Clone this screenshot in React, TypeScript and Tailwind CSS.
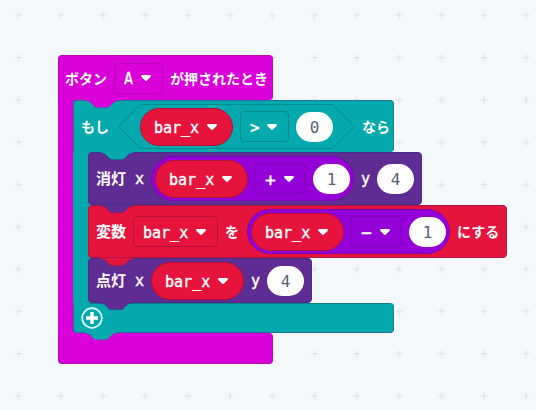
import type { ReactNode } from "react";

const MONO = "font-['DejaVu_Sans_Mono','Noto_Sans_CJK_JP',monospace]";

function Arrow({ className }: { className: string }) {
  return (
    <svg
      viewBox="0 0 10 6"
      className={`pointer-events-none absolute top-1/2 h-[6px] w-[10px] -translate-y-1/2 ${className}`}
      aria-hidden="true"
    >
      <path
        d="M1.4 0H8.6C9.9 0 10.3 1.2 9.5 2L6.2 5.3C5.5 6.1 4.5 6.1 3.8 5.3L.5 2C-.3 1.2.1 0 1.4 0Z"
        fill="#fff"
      />
    </svg>
  );
}

type PickerProps = { label: string; options: string[]; className: string };

/* Square drop-down field set into a block. */
function Picker({ label, options, className }: PickerProps) {
  return (
    <span className="relative flex shrink-0">
      <select
        aria-label={label}
        className={`h-[31px] appearance-none rounded-[4px] border bg-transparent pt-[2px] pl-[9px] leading-[20px] text-white outline-none [-webkit-text-stroke:0.4px_white] ${className}`}
      >
        {options.map((o) => (
          <option key={o}>{o}</option>
        ))}
      </select>
      <Arrow className="right-[12px]" />
    </span>
  );
}

/* Round variable reporter. */
function Variable() {
  return (
    <span className="relative flex shrink-0">
      <select
        aria-label="変数"
        className="h-[38px] w-[93px] appearance-none rounded-full border border-[#b0103c] bg-[#e6143c] pt-[2px] pl-[13px] text-[15px] leading-[20px] text-white outline-none [-webkit-text-stroke:0.4px_white]"
      >
        <option>bar_x</option>
      </select>
      <Arrow className="right-[16px]" />
    </span>
  );
}

function Num({ value, label }: { value: string; label: string }) {
  return (
    <input
      aria-label={label}
      defaultValue={value}
      className="h-[30px] w-[37px] shrink-0 rounded-full bg-white pt-[2px] text-center text-[16px] text-[#575e75] outline-none"
    />
  );
}

function Kana({ children }: { children: ReactNode }) {
  return <span className="min-w-[15px] shrink-0 pt-[2px] text-[14px] font-bold whitespace-nowrap">{children}</span>;
}

function Word({ children }: { children: ReactNode }) {
  return <span className="shrink-0 pt-[2px] text-[15px] font-bold whitespace-nowrap">{children}</span>;
}

function Axis({ children }: { children: ReactNode }) {
  return (
    <span className="shrink-0 pt-[2px] text-[15px] font-normal whitespace-nowrap [-webkit-text-stroke:0.4px_white]">
      {children}
    </span>
  );
}

/* Math reporter: variable, operator, number. */
function MathReporter({ op }: { op: string }) {
  return (
    <span className="flex h-[45px] shrink-0 items-center gap-[7px] rounded-full border border-[#7a08b0] bg-[#9600d8] px-[3px]">
      <Variable />
      <Picker label="演算子" options={[op]} className="w-[51px] border-[#8104bd] text-[18px]" />
      <Num value="1" label="値" />
    </span>
  );
}

/* Connector tab that hangs from the block above into the one below. */
function Tab({ fill, stroke }: { fill: string; stroke: string }) {
  return (
    <svg viewBox="0 0 32 9" className="absolute -top-px left-[12px] h-[9px] w-[32px]" aria-hidden="true">
      <path
        d="M0 0V1C3 1 4 2 5.5 3.5L8 6C9 7.2 10 7.7 12 7.7H20C22 7.7 23 7.2 24 6L26.5 3.5C28 2 29 1 32 1V0Z"
        fill={fill}
      />
      <path
        d="M0 1.3C3 1.3 4 2 5.5 3.5L8 6C9 7.2 10 7.7 12 7.7H20C22 7.7 23 7.2 24 6L26.5 3.5C28 2 29 1.3 32 1.3"
        fill="none"
        stroke={stroke}
      />
    </svg>
  );
}

function Statement({ className, tab, children }: { className: string; tab: ReactNode; children: ReactNode }) {
  return (
    <div className={`relative flex w-fit items-center gap-[7px] rounded-[4px] border px-[7px] ${className}`}>
      {tab}
      {children}
    </div>
  );
}

function IfBlock() {
  return (
    <div className="relative">
      <div className="relative flex h-[52px] w-[321px] items-center gap-[7px] rounded-t-[4px] rounded-br-[4px] border border-b-0 border-[#21719c] border-r-[#0b8588] bg-[#03a9ad] px-[7px]">
        <Tab fill="#da00da" stroke="#5b5bb5" />
        <span className="flex w-[30px] shrink-0">
          <Kana>もし</Kana>
        </span>
        <span className="relative flex h-[45px] shrink-0 items-center gap-[7px] px-[22px]">
          <svg
            viewBox="0 0 237 45"
            preserveAspectRatio="none"
            className="absolute inset-0 h-full w-full"
            aria-hidden="true"
          >
            <path d="M22.5 .5H214.5L236.5 22.5L214.5 44.5H22.5L.5 22.5Z" fill="none" stroke="#058a8d" />
          </svg>
          <Variable />
          <Picker label="比較" options={[">", "<", "="]} className="w-[49px] border-[#058a8d] text-[16px]" />
          <Num value="0" label="比較する値" />
        </span>
        <Kana>なら</Kana>
      </div>

      <div className="bg-[linear-gradient(#03a9ad,#03a9ad)] bg-[length:20px_100%] bg-no-repeat pl-[15px]">
        <Statement
          className="h-[53px] border-[#43308c] bg-[#5f2c93]"
          tab={<Tab fill="#03a9ad" stroke="#2c5096" />}
        >
          <Word>
            消灯 <Axis>x</Axis>
          </Word>
          <MathReporter op="+" />
          <Axis>y</Axis>
          <Num value="4" label="消灯 y" />
        </Statement>
        <Statement
          className="h-[53px] border-[#ae1547] bg-[#e6143c]"
          tab={<Tab fill="#5f2c93" stroke="#8c1f66" />}
        >
          <Word>変数</Word>
          <Picker label="変数名" options={["bar_x"]} className="w-[85px] border-[#b8103a] text-[15px]" />
          <Kana>を</Kana>
          <MathReporter op="−" />
          <Kana>にする</Kana>
        </Statement>
        <Statement
          className="h-[45px] border-[#4a2c85] bg-[#5f2c93]"
          tab={<Tab fill="#e6143c" stroke="#8c1f66" />}
        >
          <Word>
            点灯 <Axis>x</Axis>
          </Word>
          <Variable />
          <Axis>y</Axis>
          <Num value="4" label="点灯 y" />
        </Statement>
      </div>

      <div className="relative flex h-[30px] w-[321px] items-center rounded-r-[4px] rounded-bl-[4px] border border-t-0 border-[#21719c] border-r-[#0b8588] bg-[#03a9ad] pl-[7px] before:absolute before:top-0 before:right-[3px] before:left-[15px] before:h-px before:bg-[#0b7f8a]">
        <span className="absolute top-0 left-[14px]">
          <Tab fill="#5f2c93" stroke="#2c5096" />
        </span>
        <button type="button" aria-label="条件を追加" className="flex">
          <svg viewBox="0 0 22 22" className="h-[22px] w-[22px]" aria-hidden="true">
            <circle cx="11" cy="11" r="9.8" fill="none" stroke="#d5ffff" strokeWidth="1.8" />
            <path d="M11 5V17M5 11H17" stroke="#fff" strokeWidth="3.4" />
          </svg>
        </button>
      </div>
    </div>
  );
}

export default function App() {
  return (
    <main className={`relative min-h-screen overflow-hidden bg-[#f4f8fa] pt-[55px] pl-[58px] text-white ${MONO}`}>
      <svg className="absolute inset-0 h-full w-full" aria-hidden="true">
        <defs>
          <pattern id="grid" x="-3" y="-6" width="42.3" height="42.3" patternUnits="userSpaceOnUse">
            <path d="M21.5 18V25M18 21.5H25" stroke="#dde1e3" />
          </pattern>
        </defs>
        <rect width="100%" height="100%" fill="url(#grid)" />
      </svg>

      <section className="relative w-fit">
        <div className="flex h-[45px] w-[215px] items-center gap-[7px] rounded-t-[4px] rounded-br-[4px] border border-b-0 border-[#b30cb8] bg-[#da00da] px-[6px]">
          <Kana>ボタン</Kana>
          <Picker label="ボタン" options={["A", "B", "A+B"]} className="w-[49px] border-[#b808bb] text-[15px]" />
          <Kana>が押されたとき</Kana>
        </div>
        <div className="bg-[linear-gradient(#da00da,#da00da)] bg-[length:20px_100%] bg-no-repeat pl-[15px]">
          <IfBlock />
        </div>
        <div className="relative h-[31px] w-[215px] rounded-r-[4px] rounded-bl-[4px] border border-t-0 border-[#b30cb8] bg-[#da00da]">
          <span className="absolute top-0 left-[14px]">
            <Tab fill="#03a9ad" stroke="#5b5bb5" />
          </span>
        </div>
      </section>
    </main>
  );
}
